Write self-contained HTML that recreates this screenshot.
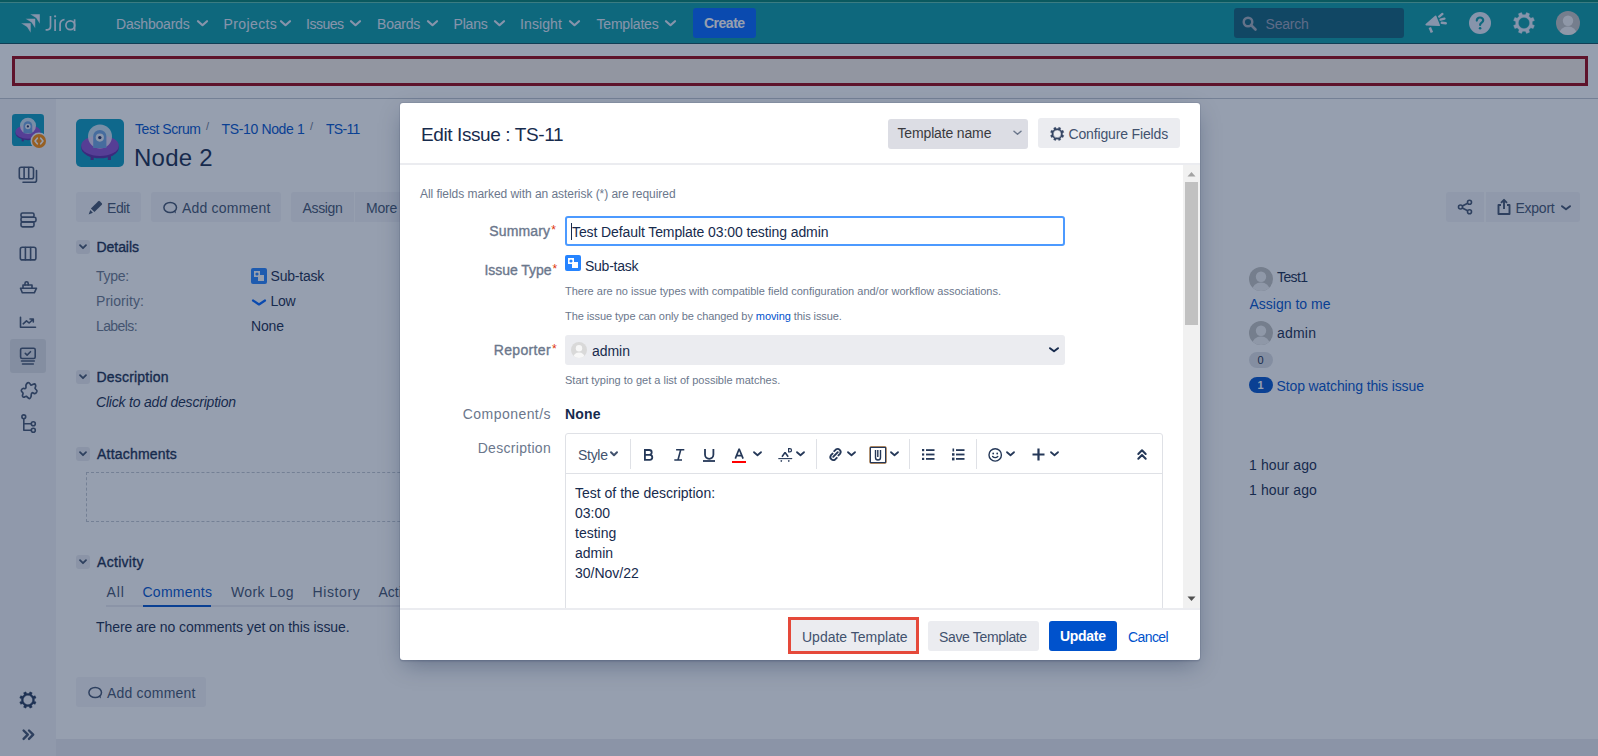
<!DOCTYPE html>
<html><head><meta charset="utf-8"><title>Edit Issue</title>
<style>
*{box-sizing:border-box;margin:0;padding:0}
html,body{width:1598px;height:756px;overflow:hidden;background:#fff;font-family:"Liberation Sans",sans-serif;color:#172B4D;font-size:14px}
.a{position:absolute;white-space:nowrap;line-height:normal}
svg.a{overflow:visible}
</style></head><body>
<div class="a" style="left:0px;top:0px;width:1598px;height:2px;background:#00806E;"></div>
<div class="a" style="left:0px;top:2px;width:1598px;height:1px;background:#5AC0AD;"></div>
<div class="a" style="left:0px;top:3px;width:1598px;height:40px;background:#099CA4;"></div>
<div class="a" style="left:0px;top:43px;width:1598px;height:1px;background:#0B4F5C;"></div>
<svg class="a" style="left:16px;top:8px;" width="68" height="30" viewBox="0 0 68 30"><defs><linearGradient id="jg" x1="0.9" y1="0.1" x2="0.15" y2="0.85"><stop offset="0.3" stop-color="#E3EBF8"/><stop offset="1" stop-color="#E3EBF8" stop-opacity=".35"/></linearGradient></defs><path d="M5.1 15.2H14.7V24.8L10.9 18.8V19.0H11.1Z" fill="url(#jg)"/><path d="M9.6 10.7H19.2V20.3L15.4 14.3V14.5H15.6Z" fill="url(#jg)"/><path d="M14.2 6.2H23.8V15.8L20.0 9.8V10.0H20.2Z" fill="url(#jg)"/><g fill="none" stroke="#E3EBF8" stroke-width="1.7"><path d="M34.5 8.1V18.6a3.2 3.2 0 0 1-3.2 3.2H29.6"/><path d="M39.1 11.3V23"/><path d="M44.1 23V16a4.4 4.4 0 0 1 4.4-4.4"/><circle cx="54.3" cy="17.2" r="4.4"/><path d="M58.6 11.3V23"/></g><circle cx="39.1" cy="8.3" r="1.1" fill="#E3EBF8"/></svg>
<div class="a" style="left:116px;top:15.83px;font-size:14px;color:#E3EBF8;font-weight:normal;letter-spacing:-0.2px;font-style:normal;">Dashboards</div>
<svg class="a" style="left:197px;top:20px;" width="11" height="8" viewBox="0 0 11 8"><path d="M1 1.2 L5.5 5.2 L10 1.2" fill="none" stroke="#E3EBF8" stroke-width="2.2" stroke-linecap="round" stroke-linejoin="round"/></svg>
<div class="a" style="left:223.5px;top:15.83px;font-size:14px;color:#E3EBF8;font-weight:normal;letter-spacing:0.4px;font-style:normal;">Projects</div>
<svg class="a" style="left:280px;top:20px;" width="11" height="8" viewBox="0 0 11 8"><path d="M1 1.2 L5.5 5.2 L10 1.2" fill="none" stroke="#E3EBF8" stroke-width="2.2" stroke-linecap="round" stroke-linejoin="round"/></svg>
<div class="a" style="left:306px;top:15.83px;font-size:14px;color:#E3EBF8;font-weight:normal;letter-spacing:-0.5px;font-style:normal;">Issues</div>
<svg class="a" style="left:350px;top:20px;" width="11" height="8" viewBox="0 0 11 8"><path d="M1 1.2 L5.5 5.2 L10 1.2" fill="none" stroke="#E3EBF8" stroke-width="2.2" stroke-linecap="round" stroke-linejoin="round"/></svg>
<div class="a" style="left:377px;top:15.83px;font-size:14px;color:#E3EBF8;font-weight:normal;letter-spacing:-0.2px;font-style:normal;">Boards</div>
<svg class="a" style="left:427px;top:20px;" width="11" height="8" viewBox="0 0 11 8"><path d="M1 1.2 L5.5 5.2 L10 1.2" fill="none" stroke="#E3EBF8" stroke-width="2.2" stroke-linecap="round" stroke-linejoin="round"/></svg>
<div class="a" style="left:453.5px;top:15.83px;font-size:14px;color:#E3EBF8;font-weight:normal;letter-spacing:-0.2px;font-style:normal;">Plans</div>
<svg class="a" style="left:494px;top:20px;" width="11" height="8" viewBox="0 0 11 8"><path d="M1 1.2 L5.5 5.2 L10 1.2" fill="none" stroke="#E3EBF8" stroke-width="2.2" stroke-linecap="round" stroke-linejoin="round"/></svg>
<div class="a" style="left:520px;top:15.83px;font-size:14px;color:#E3EBF8;font-weight:normal;letter-spacing:0.1px;font-style:normal;">Insight</div>
<svg class="a" style="left:569px;top:20px;" width="11" height="8" viewBox="0 0 11 8"><path d="M1 1.2 L5.5 5.2 L10 1.2" fill="none" stroke="#E3EBF8" stroke-width="2.2" stroke-linecap="round" stroke-linejoin="round"/></svg>
<div class="a" style="left:596.5px;top:15.83px;font-size:14px;color:#E3EBF8;font-weight:normal;letter-spacing:-0.2px;font-style:normal;">Templates</div>
<svg class="a" style="left:665px;top:20px;" width="11" height="8" viewBox="0 0 11 8"><path d="M1 1.2 L5.5 5.2 L10 1.2" fill="none" stroke="#E3EBF8" stroke-width="2.2" stroke-linecap="round" stroke-linejoin="round"/></svg>
<div class="a" style="left:693px;top:8px;width:63px;height:30px;background:#0065FF;border-radius:3px"></div>
<div class="a" style="left:704px;top:15.33px;font-size:14px;color:#FFFFFF;font-weight:bold;letter-spacing:-0.5px;font-style:normal;">Create</div>
<div class="a" style="left:1234px;top:8px;width:170px;height:30px;background:#0E6077;border-radius:3px"></div>
<svg class="a" style="left:1242px;top:16px;" width="15" height="15" viewBox="0 0 15 15"><circle cx="6" cy="6" r="4.3" fill="none" stroke="#A5ADBA" stroke-width="2.4"/><path d="M9 9l4.5 4.5" stroke="#A5ADBA" stroke-width="2.6" stroke-linecap="round"/></svg>
<div class="a" style="left:1265.5px;top:16.33px;font-size:14px;color:#9AA0B8;font-weight:normal;letter-spacing:-0.2px;font-style:normal;">Search</div>
<svg class="a" style="left:1424px;top:12px;" width="24" height="22" viewBox="0 0 24 22"><g fill="#E3EBF8" stroke="#E3EBF8" stroke-linecap="round" stroke-linejoin="round"><path d="M2.2 12.6L11.6 4.4L15.2 13.3Z" stroke-width="1.6"/><path d="M5.8 15.4L7.9 20.6" stroke-width="2.6" stroke-linecap="butt"/><path d="M15.2 4.6L18.4 1.9M16.6 7.6L20.4 6.6M17.8 10.8L21.8 11.3" stroke-width="2.4"/></g></svg>
<svg class="a" style="left:1469px;top:12px;" width="22" height="22" viewBox="0 0 22 22"><circle cx="11" cy="11" r="11" fill="#E3EBF8"/><path d="M7.8 8.6c0-1.9 1.4-3.1 3.2-3.1s3.2 1.1 3.2 2.8c0 2.3-3.1 2.4-3.1 4.6" fill="none" stroke="#099CA4" stroke-width="2.2" stroke-linecap="round"/><circle cx="11.1" cy="16.3" r="1.3" fill="#099CA4"/></svg>
<svg class="a" style="left:1512px;top:11px;" width="24" height="24" viewBox="0 0 24 24"><path d="M20.18 13.43 L22.40 14.53 L21.14 17.56 L18.79 16.77 L17.87 17.87 L16.77 18.79 L17.56 21.14 L14.53 22.40 L13.43 20.18 L12.00 20.30 L10.57 20.18 L9.47 22.40 L6.44 21.14 L7.23 18.79 L6.13 17.87 L5.21 16.77 L2.86 17.56 L1.60 14.53 L3.82 13.43 L3.70 12.00 L3.82 10.57 L1.60 9.47 L2.86 6.44 L5.21 7.23 L6.13 6.13 L7.23 5.21 L6.44 2.86 L9.47 1.60 L10.57 3.82 L12.00 3.70 L13.43 3.82 L14.53 1.60 L17.56 2.86 L16.77 5.21 L17.87 6.13 L18.79 7.23 L21.14 6.44 L22.40 9.47 L20.18 10.57 L20.30 12.00Z M17.7 12 A5.7 5.7 0 1 0 6.3 12 A5.7 5.7 0 1 0 17.7 12Z" fill="#E3EBF8" fill-rule="evenodd" stroke="#E3EBF8" stroke-width="0.4" stroke-linejoin="round"/></svg>
<svg class="a" style="left:1556px;top:11px;" width="24" height="24" viewBox="0 0 24 24"><defs><clipPath id="ca"><circle cx="12" cy="12" r="12"/></clipPath></defs><circle cx="12" cy="12" r="12" fill="#C3C3C1"/><g clip-path="url(#ca)" fill="#F3F3F3"><circle cx="12" cy="9.8" r="5.2"/><ellipse cx="12" cy="23.5" rx="8.8" ry="8"/></g></svg>
<div class="a" style="left:0px;top:44px;width:1598px;height:54px;background:#FFFFFF;"></div>
<div class="a" style="left:0px;top:98px;width:1598px;height:1px;background:#C1C7D0;"></div>
<div class="a" style="left:12px;top:56px;width:1576px;height:30px;background:#F8EEE6;border:3px solid #9A0010;box-sizing:border-box"></div>
<div class="a" style="left:0px;top:99px;width:56px;height:657px;background:#F4F5F7;"></div>
<div class="a" style="left:56px;top:739px;width:1542px;height:17px;background:#EBECF0;"></div>
<svg class="a" style="left:76px;top:119px;" width="48" height="48" viewBox="0 0 48 48"><rect width="48" height="48" rx="5" fill="#0A9CC0"/><rect x="14.5" y="34" width="3.2" height="7" fill="#5A2A9B"/><rect x="31.8" y="34" width="3.2" height="7" fill="#5A2A9B"/><ellipse cx="24" cy="28.5" rx="18.8" ry="10.8" fill="#5A2AA5"/><ellipse cx="24" cy="26.8" rx="18.8" ry="10.3" fill="#8A4FD0"/><circle cx="24" cy="17.6" r="12" fill="#F4F0FA" opacity=".82"/><path d="M17.2 29V17.5a6.6 6.6 0 0 1 13.2 0V29z" fill="#6EA3E0"/><circle cx="23.8" cy="18.6" r="4.1" fill="#E9EEF6"/><circle cx="23.8" cy="18.6" r="1.7" fill="#1F2A60"/></svg>
<svg class="a" style="left:12px;top:114px;" width="32" height="32" viewBox="0 0 48 48"><rect width="48" height="48" rx="5" fill="#0A9CC0"/><rect x="14.5" y="34" width="3.2" height="7" fill="#5A2A9B"/><rect x="31.8" y="34" width="3.2" height="7" fill="#5A2A9B"/><ellipse cx="24" cy="28.5" rx="18.8" ry="10.8" fill="#5A2AA5"/><ellipse cx="24" cy="26.8" rx="18.8" ry="10.3" fill="#8A4FD0"/><circle cx="24" cy="17.6" r="12" fill="#F4F0FA" opacity=".82"/><path d="M17.2 29V17.5a6.6 6.6 0 0 1 13.2 0V29z" fill="#6EA3E0"/><circle cx="23.8" cy="18.6" r="4.1" fill="#E9EEF6"/><circle cx="23.8" cy="18.6" r="1.7" fill="#1F2A60"/></svg>
<svg class="a" style="left:30px;top:132px;" width="18" height="18" viewBox="0 0 18 18"><circle cx="9" cy="9" r="8.5" fill="#F4F5F7"/><circle cx="9" cy="9" r="7" fill="#FF8B00"/><path d="M7.3 6.2L5 9l2.3 2.8M10.7 6.2L13 9l-2.3 2.8" fill="none" stroke="#fff" stroke-width="1.6" stroke-linecap="round" stroke-linejoin="round"/></svg>
<svg class="a" style="left:18px;top:166px;" width="20" height="20" viewBox="0 0 20 20"><g fill="none" stroke="#42526E" stroke-width="1.6" stroke-linecap="round" stroke-linejoin="round"><rect x="1.3" y="1.3" width="14.2" height="11.5" rx="1.8"/><path d="M6.1 1.5v11M10.7 1.5v11M5 16.3h11.5a2 2 0 0 0 2-2V4.5"/></g></svg>
<svg class="a" style="left:19px;top:212px;" width="20" height="20" viewBox="0 0 20 20"><g fill="none" stroke="#42526E" stroke-width="1.6" stroke-linecap="round" stroke-linejoin="round"><rect x="2" y="1" width="13" height="4.3" rx="1.6"/><rect x="2" y="5.3" width="15" height="4.6" rx="1.6"/><rect x="2" y="9.9" width="13" height="5" rx="1.6"/></g></svg>
<svg class="a" style="left:19px;top:246px;" width="20" height="20" viewBox="0 0 20 20"><g fill="none" stroke="#42526E" stroke-width="1.6" stroke-linecap="round" stroke-linejoin="round"><rect x="1.3" y="1.3" width="15.6" height="12.6" rx="2"/><path d="M6.4 1.5v12.2M11.6 1.5v12.2"/></g></svg>
<svg class="a" style="left:19px;top:281px;" width="20" height="20" viewBox="0 0 20 20"><g fill="none" stroke="#42526E" stroke-width="1.6" stroke-linecap="round" stroke-linejoin="round"><path d="M1.5 7.2h16l-2.2 4.6H3.3z"/><path d="M4 7V4h9v3"/><path d="M6 4V2.3a1.6 1.6 0 0 1 3.2 0V4"/></g></svg>
<svg class="a" style="left:19px;top:316px;" width="20" height="20" viewBox="0 0 20 20"><g fill="none" stroke="#42526E" stroke-width="1.6" stroke-linecap="round" stroke-linejoin="round"><path d="M1.5 1.2v10h15"/><path d="M4.2 7.8l3.3-3 2.6 2.2L14 3.3M11 3h3.3v3"/></g></svg>
<div class="a" style="left:10px;top:339px;width:36px;height:34px;background:#DFE1E6;border-radius:3px"></div>
<svg class="a" style="left:19px;top:347px;" width="20" height="20" viewBox="0 0 20 20"><g fill="none" stroke="#42526E" stroke-width="1.6" stroke-linecap="round" stroke-linejoin="round"><rect x="1.6" y="1.2" width="14.6" height="10.3" rx="1.5"/><path d="M6.3 6.4l1.8 1.7 3.4-3.4M2.5 14h12.8M3.5 17h10.8"/></g></svg>
<svg class="a" style="left:16px;top:378px;" width="26" height="26" viewBox="0 0 26 26"><path d="M12.4 4.6 C13.6 4.6 14.4 6.6 14.9 7.1 C15.6 7.6 17.6 5.6 18.6 5.9 C19.8 6.4 19.9 8.2 19.4 9 C18.9 9.8 18.6 10.3 19.6 11.2 C20.6 12 21.3 12.7 20.9 13.6 C20.2 15 19 15.8 18.2 15.6 C17.2 15.2 16.6 14.3 16 14.8 C15.3 15.4 15.1 16.3 15.2 17.4 C15.2 18.5 14.3 20.4 13.3 20.6 C12.3 20.6 11 18.6 10.3 18.3 C9.4 18 8.6 19.5 7.6 19.2 C6.6 18.9 6.2 17.8 6.6 16.9 C7 16 7.5 15.4 6.7 14.6 C5.9 13.8 5 13.3 5.3 12.3 C5.7 11.2 6.6 10.3 7.4 10.3 C8.3 10.4 9 11.2 9.7 10.3 C10.3 9.5 9.9 8.6 9.9 7.6 C10 6.4 11.3 4.6 12.4 4.6Z" fill="none" stroke="#42526E" stroke-width="1.7" stroke-linejoin="round"/></svg>
<svg class="a" style="left:20px;top:414px;" width="20" height="20" viewBox="0 0 20 20"><g fill="none" stroke="#42526E" stroke-width="1.6" stroke-linecap="round" stroke-linejoin="round"><circle cx="3.8" cy="2.8" r="1.9"/><circle cx="13.3" cy="9.8" r="2"/><circle cx="13.3" cy="16.2" r="2"/><path d="M3.8 4.7v11.5h7.5M3.8 9.8h7.5"/></g></svg>
<svg class="a" style="left:18px;top:690px;" width="20" height="20" viewBox="0 0 20 20"><path d="M16.29 11.18 L18.05 12.04 L17.11 14.32 L15.25 13.68 L14.50 14.60 L13.58 15.35 L14.22 17.21 L11.94 18.15 L11.08 16.39 L9.90 16.50 L8.72 16.39 L7.86 18.15 L5.58 17.21 L6.22 15.35 L5.30 14.60 L4.55 13.68 L2.69 14.32 L1.75 12.04 L3.51 11.18 L3.40 10.00 L3.51 8.82 L1.75 7.96 L2.69 5.68 L4.55 6.32 L5.30 5.40 L6.22 4.65 L5.58 2.79 L7.86 1.85 L8.72 3.61 L9.90 3.50 L11.08 3.61 L11.94 1.85 L14.22 2.79 L13.58 4.65 L14.50 5.40 L15.25 6.32 L17.11 5.68 L18.05 7.96 L16.29 8.82 L16.40 10.00Z M14.600000000000001 10 A4.7 4.7 0 1 0 5.2 10 A4.7 4.7 0 1 0 14.600000000000001 10Z" fill="#253858" fill-rule="evenodd" stroke="#253858" stroke-width="0.4" stroke-linejoin="round"/></svg>
<svg class="a" style="left:20px;top:729px;" width="20" height="12" viewBox="0 0 20 12"><g fill="none" stroke="#42526E" stroke-width="2.4" stroke-linecap="round" stroke-linejoin="round"><path d="M3.6 1.5l4.2 4.2-4.2 4.2M9 1.5l4.2 4.2L9 9.9"/></g></svg>
<div class="a" style="left:135px;top:121.33px;font-size:14px;color:#0052CC;font-weight:normal;letter-spacing:-0.45px;font-style:normal;">Test Scrum</div>
<div class="a" style="left:206px;top:120.05px;font-size:11px;color:#6B778C;font-weight:normal;letter-spacing:0px;font-style:normal;">/</div>
<div class="a" style="left:221.5px;top:121.33px;font-size:14px;color:#0052CC;font-weight:normal;letter-spacing:-0.35px;font-style:normal;">TS-10 Node 1</div>
<div class="a" style="left:310px;top:120.05px;font-size:11px;color:#6B778C;font-weight:normal;letter-spacing:0px;font-style:normal;">/</div>
<div class="a" style="left:326px;top:121.33px;font-size:14px;color:#0052CC;font-weight:normal;letter-spacing:-0.7px;font-style:normal;">TS-11</div>
<div class="a" style="left:134px;top:144.28px;font-size:24px;color:#172B4D;font-weight:normal;letter-spacing:0.25px;font-style:normal;">Node 2</div>
<div class="a" style="left:76px;top:192px;width:65px;height:30px;background:#F4F5F7;border-radius:3px"></div>
<svg class="a" style="left:88px;top:200px;" width="15" height="15" viewBox="0 0 15 15"><path d="M2.9 8.6L10.3 1.2a1 1 0 0 1 1.4 0l2.1 2.1a1 1 0 0 1 0 1.4L6.4 12.1z" fill="#42526E"/><path d="M2.3 10.1L4.9 12.7L0.6 14.4z" fill="#42526E"/></svg>
<div class="a" style="left:107px;top:199.83px;font-size:14px;color:#42526E;font-weight:normal;letter-spacing:-0.4px;font-style:normal;">Edit</div>
<div class="a" style="left:151px;top:192px;width:130px;height:30px;background:#F4F5F7;border-radius:3px"></div>
<svg class="a" style="left:162px;top:199px;" width="16" height="16" viewBox="0 0 16 16"><ellipse cx="8.2" cy="8.5" rx="6.3" ry="5.1" fill="none" stroke="#42526E" stroke-width="1.5"/><path d="M11.2 12.3l2.8 2.2-.6-3.2z" fill="#42526E"/></svg>
<div class="a" style="left:182px;top:199.83px;font-size:14px;color:#42526E;font-weight:normal;letter-spacing:0.2px;font-style:normal;">Add comment</div>
<div class="a" style="left:291px;top:192px;width:63px;height:30px;background:#F4F5F7;border-radius:3px 0 0 3px"></div>
<div class="a" style="left:302.5px;top:199.83px;font-size:14px;color:#42526E;font-weight:normal;letter-spacing:-0.35px;font-style:normal;">Assign</div>
<div class="a" style="left:355px;top:192px;width:60px;height:30px;background:#F4F5F7;border-radius:0 3px 3px 0"></div>
<div class="a" style="left:366px;top:199.83px;font-size:14px;color:#42526E;font-weight:normal;letter-spacing:-0.2px;font-style:normal;">More</div>
<div class="a" style="left:76px;top:240px;width:14px;height:14px;background:#EBECF0;border-radius:3px"></div>
<svg class="a" style="left:79px;top:244px;" width="8" height="6" viewBox="0 0 8 6"><path d="M1 1.2l3 3 3-3" fill="none" stroke="#42526E" stroke-width="1.8" stroke-linecap="round" stroke-linejoin="round"/></svg>
<div class="a" style="left:96.5px;top:239.33px;font-size:14px;color:#172B4D;font-weight:normal;letter-spacing:-0.05px;font-style:normal;-webkit-text-stroke:0.35px #172B4D;">Details</div>
<div class="a" style="left:96px;top:267.83px;font-size:14px;color:#6B778C;font-weight:normal;letter-spacing:-0.25px;font-style:normal;">Type:</div>
<svg class="a" style="left:251px;top:268px;" width="16" height="16" viewBox="0 0 16 16"><rect width="16" height="16" rx="2" fill="#2684FF"/><rect x="3" y="3" width="6" height="6" fill="#fff"/><circle cx="6" cy="6" r="1.6" fill="#2684FF"/><rect x="7" y="7" width="6" height="6" fill="#fff"/></svg>
<div class="a" style="left:270.5px;top:267.83px;font-size:14px;color:#172B4D;font-weight:normal;letter-spacing:-0.2px;font-style:normal;">Sub-task</div>
<div class="a" style="left:96px;top:292.83px;font-size:14px;color:#6B778C;font-weight:normal;letter-spacing:0.05px;font-style:normal;">Priority:</div>
<svg class="a" style="left:251px;top:298px;" width="16" height="10" viewBox="0 0 16 10"><path d="M2 2.5l6 4 6-4" fill="none" stroke="#0065FF" stroke-width="2.2" stroke-linecap="round" stroke-linejoin="round"/></svg>
<div class="a" style="left:270.5px;top:292.83px;font-size:14px;color:#172B4D;font-weight:normal;letter-spacing:-0.3px;font-style:normal;">Low</div>
<div class="a" style="left:96px;top:317.83px;font-size:14px;color:#6B778C;font-weight:normal;letter-spacing:-0.6px;font-style:normal;">Labels:</div>
<div class="a" style="left:251px;top:317.83px;font-size:14px;color:#172B4D;font-weight:normal;letter-spacing:-0.15px;font-style:normal;">None</div>
<div class="a" style="left:76px;top:370px;width:14px;height:14px;background:#EBECF0;border-radius:3px"></div>
<svg class="a" style="left:79px;top:374px;" width="8" height="6" viewBox="0 0 8 6"><path d="M1 1.2l3 3 3-3" fill="none" stroke="#42526E" stroke-width="1.8" stroke-linecap="round" stroke-linejoin="round"/></svg>
<div class="a" style="left:96.5px;top:369.33px;font-size:14px;color:#172B4D;font-weight:normal;letter-spacing:0.2px;font-style:normal;-webkit-text-stroke:0.35px #172B4D;">Description</div>
<div class="a" style="left:96px;top:394.33px;font-size:14px;color:#172B4D;font-weight:normal;letter-spacing:-0.2px;font-style:italic;">Click to add description</div>
<div class="a" style="left:76px;top:447px;width:14px;height:14px;background:#EBECF0;border-radius:3px"></div>
<svg class="a" style="left:79px;top:451px;" width="8" height="6" viewBox="0 0 8 6"><path d="M1 1.2l3 3 3-3" fill="none" stroke="#42526E" stroke-width="1.8" stroke-linecap="round" stroke-linejoin="round"/></svg>
<div class="a" style="left:97px;top:446.33px;font-size:14px;color:#172B4D;font-weight:normal;letter-spacing:0.2px;font-style:normal;-webkit-text-stroke:0.35px #172B4D;">Attachments</div>
<div class="a" style="left:86px;top:472px;width:500px;height:50px;background:transparent;border:1px dashed #C1C7D0;box-sizing:border-box"></div>
<div class="a" style="left:76px;top:555px;width:14px;height:14px;background:#EBECF0;border-radius:3px"></div>
<svg class="a" style="left:79px;top:559px;" width="8" height="6" viewBox="0 0 8 6"><path d="M1 1.2l3 3 3-3" fill="none" stroke="#42526E" stroke-width="1.8" stroke-linecap="round" stroke-linejoin="round"/></svg>
<div class="a" style="left:97px;top:554.33px;font-size:14px;color:#172B4D;font-weight:normal;letter-spacing:0.3px;font-style:normal;-webkit-text-stroke:0.35px #172B4D;">Activity</div>
<div class="a" style="left:106.5px;top:584.33px;font-size:14px;color:#42526E;font-weight:normal;letter-spacing:0.9px;font-style:normal;">All</div>
<div class="a" style="left:142.5px;top:584.33px;font-size:14px;color:#0052CC;font-weight:normal;letter-spacing:0.25px;font-style:normal;">Comments</div>
<div class="a" style="left:231px;top:584.33px;font-size:14px;color:#42526E;font-weight:normal;letter-spacing:0.4px;font-style:normal;">Work Log</div>
<div class="a" style="left:312.5px;top:584.33px;font-size:14px;color:#42526E;font-weight:normal;letter-spacing:0.6px;font-style:normal;">History</div>
<div class="a" style="left:378.5px;top:584.33px;font-size:14px;color:#42526E;font-weight:normal;letter-spacing:0px;font-style:normal;">Activity</div>
<div class="a" style="left:106px;top:605px;width:400px;height:2px;background:#EBECF0;"></div>
<div class="a" style="left:143px;top:605px;width:68px;height:2px;background:#0052CC;"></div>
<div class="a" style="left:96px;top:619.33px;font-size:14px;color:#172B4D;font-weight:normal;letter-spacing:-0.08px;font-style:normal;">There are no comments yet on this issue.</div>
<div class="a" style="left:76px;top:677px;width:130px;height:30px;background:#F4F5F7;border-radius:3px"></div>
<svg class="a" style="left:87px;top:684px;" width="16" height="16" viewBox="0 0 16 16"><ellipse cx="8.2" cy="8.5" rx="6.3" ry="5.1" fill="none" stroke="#42526E" stroke-width="1.5"/><path d="M11.2 12.3l2.8 2.2-.6-3.2z" fill="#42526E"/></svg>
<div class="a" style="left:107px;top:684.83px;font-size:14px;color:#42526E;font-weight:normal;letter-spacing:0.2px;font-style:normal;">Add comment</div>
<div class="a" style="left:1446px;top:192px;width:38px;height:30px;background:#F4F5F7;border-radius:3px 0 0 3px"></div>
<svg class="a" style="left:1457px;top:199px;" width="16" height="16" viewBox="0 0 16 16"><g fill="none" stroke="#42526E" stroke-width="1.6"><circle cx="12.5" cy="3.3" r="2"/><circle cx="3.5" cy="8" r="2"/><circle cx="12.5" cy="12.7" r="2"/><path d="M5.3 7l5.4-2.8M5.3 9l5.4 2.8"/></g></svg>
<div class="a" style="left:1486px;top:192px;width:94px;height:30px;background:#F4F5F7;border-radius:0 3px 3px 0"></div>
<svg class="a" style="left:1496px;top:198px;" width="16" height="18" viewBox="0 0 16 18"><g fill="none" stroke="#42526E" stroke-width="1.9" stroke-linejoin="round"><path d="M5 7H2.5v9h11V7H11"/><path d="M8 11V2M5 4.8L8 1.8l3 3"/></g></svg>
<div class="a" style="left:1515.5px;top:199.83px;font-size:14px;color:#42526E;font-weight:normal;letter-spacing:-0.25px;font-style:normal;">Export</div>
<svg class="a" style="left:1561px;top:205px;" width="10" height="7" viewBox="0 0 10 7"><path d="M1 1.2 L5.0 4.2 L9 1.2" fill="none" stroke="#42526E" stroke-width="2" stroke-linecap="round" stroke-linejoin="round"/></svg>
<svg class="a" style="left:1249px;top:267px;" width="24" height="24" viewBox="0 0 24 24"><defs><clipPath id="c1249267"><circle cx="12" cy="12" r="12"/></clipPath></defs><circle cx="12" cy="12" r="12" fill="#C3C3C1"/><g clip-path="url(#c1249267)" fill="#F3F3F3"><circle cx="12" cy="9.8" r="5.2"/><ellipse cx="12" cy="23.5" rx="8.8" ry="8"/></g></svg>
<div class="a" style="left:1277px;top:269.33px;font-size:14px;color:#172B4D;font-weight:normal;letter-spacing:-0.6px;font-style:normal;">Test1</div>
<div class="a" style="left:1249.5px;top:295.83px;font-size:14px;color:#0052CC;font-weight:normal;letter-spacing:0px;font-style:normal;">Assign to me</div>
<svg class="a" style="left:1249px;top:321px;" width="24" height="24" viewBox="0 0 24 24"><defs><clipPath id="c1249321"><circle cx="12" cy="12" r="12"/></clipPath></defs><circle cx="12" cy="12" r="12" fill="#C3C3C1"/><g clip-path="url(#c1249321)" fill="#F3F3F3"><circle cx="12" cy="9.8" r="5.2"/><ellipse cx="12" cy="23.5" rx="8.8" ry="8"/></g></svg>
<div class="a" style="left:1277px;top:324.83px;font-size:14px;color:#172B4D;font-weight:normal;letter-spacing:0.2px;font-style:normal;">admin</div>
<div class="a" style="left:1249px;top:352px;width:24px;height:16px;background:#DFE1E6;border-radius:8px"></div>
<div class="a" style="left:1257.5px;top:354.05px;font-size:11px;color:#172B4D;font-weight:normal;letter-spacing:0px;font-style:normal;">0</div>
<div class="a" style="left:1249px;top:377px;width:24px;height:16px;background:#0052CC;border-radius:8px"></div>
<div class="a" style="left:1257.5px;top:379.05px;font-size:11px;color:#FFFFFF;font-weight:bold;letter-spacing:0px;font-style:normal;">1</div>
<div class="a" style="left:1276.5px;top:377.83px;font-size:14px;color:#0052CC;font-weight:normal;letter-spacing:-0.12px;font-style:normal;">Stop watching this issue</div>
<div class="a" style="left:1249px;top:457.33px;font-size:14px;color:#172B4D;font-weight:normal;letter-spacing:0.1px;font-style:normal;">1 hour ago</div>
<div class="a" style="left:1249px;top:482.33px;font-size:14px;color:#172B4D;font-weight:normal;letter-spacing:0.1px;font-style:normal;">1 hour ago</div>
<div class="a" style="left:0px;top:0px;width:1598px;height:756px;background:rgba(23,43,77,0.45);"></div>
<div class="a" style="left:400px;top:103px;width:800px;height:557px;background:#fff;border-radius:3px;box-shadow:0 0 0 1px rgba(9,30,66,.08),0 2px 1px rgba(9,30,66,.08),0 8px 22px -4px rgba(9,30,66,.35)"></div>
<div class="a" style="left:421px;top:123.81px;font-size:19px;color:#172B4D;font-weight:normal;letter-spacing:-0.4px;font-style:normal;">Edit Issue : TS-11</div>
<div class="a" style="left:888px;top:119px;width:140px;height:30px;background:#DCDDE4;border-radius:3px"></div>
<div class="a" style="left:897.5px;top:125.03px;font-size:14px;color:#3A3A3E;font-weight:normal;letter-spacing:-0.15px;font-style:normal;">Template name</div>
<svg class="a" style="left:1013px;top:130px;" width="9" height="7" viewBox="0 0 9 7"><path d="M1 1.2 L4.5 4.2 L8 1.2" fill="none" stroke="#6B778C" stroke-width="1.5" stroke-linecap="round" stroke-linejoin="round"/></svg>
<div class="a" style="left:1038px;top:118px;width:142px;height:30px;background:#EBECF0;border-radius:3px"></div>
<svg class="a" style="left:1049px;top:126px;" width="16" height="16" viewBox="0 0 16 16"><path d="M13.42 8.81 L14.81 9.51 L14.01 11.44 L12.54 10.95 L11.95 11.65 L11.25 12.24 L11.74 13.71 L9.81 14.51 L9.11 13.12 L8.20 13.20 L7.29 13.12 L6.59 14.51 L4.66 13.71 L5.15 12.24 L4.45 11.65 L3.86 10.95 L2.39 11.44 L1.59 9.51 L2.98 8.81 L2.90 7.90 L2.98 6.99 L1.59 6.29 L2.39 4.36 L3.86 4.85 L4.45 4.15 L5.15 3.56 L4.66 2.09 L6.59 1.29 L7.29 2.68 L8.20 2.60 L9.11 2.68 L9.81 1.29 L11.74 2.09 L11.25 3.56 L11.95 4.15 L12.54 4.85 L14.01 4.36 L14.81 6.29 L13.42 6.99 L13.50 7.90Z M12.1 7.9 A3.9 3.9 0 1 0 4.299999999999999 7.9 A3.9 3.9 0 1 0 12.1 7.9Z" fill="#344563" fill-rule="evenodd" stroke="#344563" stroke-width="0.4" stroke-linejoin="round"/></svg>
<div class="a" style="left:1068.5px;top:125.83px;font-size:14px;color:#42526E;font-weight:normal;letter-spacing:-0.15px;font-style:normal;">Configure Fields</div>
<div class="a" style="left:400px;top:163px;width:800px;height:2px;background:#EBECF0;"></div>
<div class="a" style="left:1183px;top:165px;width:17px;height:443px;background:#F1F1F1;"></div>
<svg class="a" style="left:1186px;top:170px;" width="11" height="8" viewBox="0 0 11 8"><path d="M1.5 6.5h8L5.5 2z" fill="#A3A3A3"/></svg>
<div class="a" style="left:1185px;top:182px;width:13px;height:143px;background:#C1C1C1;"></div>
<svg class="a" style="left:1186px;top:595px;" width="11" height="8" viewBox="0 0 11 8"><path d="M1.5 1.5h8L5.5 6z" fill="#505050"/></svg>
<div class="a" style="left:420px;top:187.14px;font-size:12px;color:#6B778C;font-weight:normal;letter-spacing:-0.05px;font-style:normal;">All fields marked with an asterisk (*) are required</div>
<div class="a" style="left:256px;width:300px;text-align:right;top:223.33px;font-size:14px;color:#6B778C;font-weight:normal;letter-spacing:0.15px;-webkit-text-stroke:0.35px #6B778C;">Summary<span style="color:#DE350B;font-weight:normal;position:relative;top:-2px;margin-left:1px;font-size:12px;-webkit-text-stroke:0">*</span></div>
<div class="a" style="left:565px;top:216px;width:500px;height:30px;background:#FFFFFF;border:2px solid #4C9AFF;border-radius:3px;box-sizing:border-box"></div>
<div class="a" style="left:571px;top:223px;width:1px;height:17px;background:#172B4D;"></div>
<div class="a" style="left:572px;top:224.33px;font-size:14px;color:#172B4D;font-weight:normal;letter-spacing:-0.1px;font-style:normal;">Test Default Template 03:00 testing admin</div>
<div class="a" style="left:257px;width:300px;text-align:right;top:262.33px;font-size:14px;color:#6B778C;font-weight:normal;letter-spacing:-0.05px;-webkit-text-stroke:0.35px #6B778C;">Issue Type<span style="color:#DE350B;font-weight:normal;position:relative;top:-2px;margin-left:1px;font-size:12px;-webkit-text-stroke:0">*</span></div>
<svg class="a" style="left:565px;top:255px;" width="16" height="16" viewBox="0 0 16 16"><rect width="16" height="16" rx="2" fill="#2684FF"/><rect x="3" y="3" width="6" height="6" fill="#fff"/><circle cx="6" cy="6" r="1.6" fill="#2684FF"/><rect x="7" y="7" width="6" height="6" fill="#fff"/></svg>
<div class="a" style="left:585px;top:258.33px;font-size:14px;color:#172B4D;font-weight:normal;letter-spacing:-0.25px;font-style:normal;">Sub-task</div>
<div class="a" style="left:565px;top:285.05px;font-size:11px;color:#6B778C;font-weight:normal;letter-spacing:0px;font-style:normal;">There are no issue types with compatible field configuration and/or workflow associations.</div>
<div class="a" style="left:565px;top:310.05px;font-size:11px;color:#6B778C;font-weight:normal;letter-spacing:-0.08px;font-style:normal;">The issue type can only be changed by <span style="color:#0052CC">moving</span> this issue.</div>
<div class="a" style="left:257px;width:300px;text-align:right;top:342.33px;font-size:14px;color:#6B778C;font-weight:normal;letter-spacing:0.35px;-webkit-text-stroke:0.35px #6B778C;">Reporter<span style="color:#DE350B;font-weight:normal;position:relative;top:-2px;margin-left:1px;font-size:12px;-webkit-text-stroke:0">*</span></div>
<div class="a" style="left:565px;top:335px;width:500px;height:30px;background:#EBECF0;border-radius:3px"></div>
<svg class="a" style="left:571px;top:342px;" width="16" height="16" viewBox="0 0 16 16"><defs><clipPath id="cr"><circle cx="8" cy="8" r="8"/></clipPath></defs><circle cx="8" cy="8" r="8" fill="#D9D9D9"/><g clip-path="url(#cr)" fill="#F7F7F7"><circle cx="8" cy="6.3" r="3.2"/><ellipse cx="8" cy="15.5" rx="5.7" ry="5"/></g></svg>
<div class="a" style="left:592px;top:343.33px;font-size:14px;color:#172B4D;font-weight:normal;letter-spacing:-0.05px;font-style:normal;">admin</div>
<svg class="a" style="left:1049px;top:347px;" width="10" height="7" viewBox="0 0 10 7"><path d="M1 1.2 L5.0 4.2 L9 1.2" fill="none" stroke="#172B4D" stroke-width="2" stroke-linecap="round" stroke-linejoin="round"/></svg>
<div class="a" style="left:565px;top:374.05px;font-size:11px;color:#6B778C;font-weight:normal;letter-spacing:0px;font-style:normal;">Start typing to get a list of possible matches.</div>
<div class="a" style="left:251px;width:300px;text-align:right;top:406.33px;font-size:14px;color:#6B778C;font-weight:normal;letter-spacing:0.45px;">Component/s</div>
<div class="a" style="left:565px;top:406.33px;font-size:14px;color:#172B4D;font-weight:bold;letter-spacing:0.2px;font-style:normal;">None</div>
<div class="a" style="left:251px;width:300px;text-align:right;top:440.33px;font-size:14px;color:#6B778C;font-weight:normal;letter-spacing:0.3px;">Description</div>
<div class="a" style="left:400px;top:165px;width:783px;height:443px;overflow:hidden">
<div class="a" style="left:165px;top:268px;width:598px;height:260px;border:1px solid #DFE1E6;border-radius:3px;box-sizing:border-box"></div>
<div class="a" style="left:166px;top:308px;width:596px;height:1px;background:#DFE1E6"></div>
</div>
<div class="a" style="left:578px;top:446.83px;font-size:14px;color:#42526E;font-weight:normal;letter-spacing:-0.3px;font-style:normal;">Style</div>
<svg class="a" style="left:610px;top:451px;" width="8" height="7" viewBox="0 0 8 7"><path d="M1 1.2 L4.0 4.2 L7 1.2" fill="none" stroke="#42526E" stroke-width="2" stroke-linecap="round" stroke-linejoin="round"/></svg>
<div class="a" style="left:630px;top:439px;width:1px;height:30px;background:#DFE1E6;"></div>
<div class="a" style="left:816px;top:439px;width:1px;height:30px;background:#DFE1E6;"></div>
<div class="a" style="left:909px;top:439px;width:1px;height:30px;background:#DFE1E6;"></div>
<div class="a" style="left:976px;top:439px;width:1px;height:30px;background:#DFE1E6;"></div>
<svg class="a" style="left:638px;top:442px;" width="84" height="26" viewBox="0 0 84 26"><g fill="none" stroke="#253858" stroke-width="1.8"><path d="M6.9 8h4.4a2.4 2.4 0 0 1 0 4.8H6.9z M6.9 12.8h4.9a2.5 2.5 0 0 1 0 5H6.9z"/></g><path d="M38.1 7.75h8.2M36.3 17.95h7.7M42.6 8.2L40.1 17.5" stroke="#253858" stroke-width="1.6" fill="none"/><path d="M67 7v5.6a4.2 4.2 0 0 0 8.4 0V7" stroke="#253858" stroke-width="1.8" fill="none"/><rect x="65" y="18.1" width="12" height="1.8" fill="#253858"/></svg>
<svg class="a" style="left:731px;top:447px;" width="16" height="17" viewBox="0 0 16 17"><path d="M4.3 11.6L8 2.3h.3l3.8 9.3M5.6 8.7h5.2" stroke="#253858" stroke-width="1.7" fill="none"/><rect x="1" y="14" width="14" height="2" fill="#FF0000"/></svg>
<svg class="a" style="left:752.5px;top:451px;" width="9" height="7" viewBox="0 0 9 7"><path d="M1 1.2 L4.5 4.2 L8 1.2" fill="none" stroke="#253858" stroke-width="1.8" stroke-linecap="round" stroke-linejoin="round"/></svg>
<svg class="a" style="left:777px;top:446px;" width="18" height="18" viewBox="0 0 18 18"><path d="M5 10.8L7.8 6.8h.5L11.2 10.8" stroke="#253858" stroke-width="1.6" fill="none"/><path d="M1.3 12.6H15.2" stroke="#253858" stroke-width="1.1"/><path d="M4.6 14.3l-.6 1.3M11.5 14.3l.6 1.3" stroke="#253858" stroke-width="1.5"/><path d="M11.6 2.6h1.3a1.6 1.6 0 0 1 0 3.2h-1.3z" stroke="#253858" stroke-width="1.2" fill="none"/></svg>
<svg class="a" style="left:796px;top:451px;" width="9" height="7" viewBox="0 0 9 7"><path d="M1 1.2 L4.5 4.2 L8 1.2" fill="none" stroke="#253858" stroke-width="1.8" stroke-linecap="round" stroke-linejoin="round"/></svg>
<svg class="a" style="left:827px;top:446px;" width="17" height="17" viewBox="0 0 17 17"><g fill="none" stroke="#253858" stroke-width="1.9" stroke-linecap="round"><path d="M7.2 5.2l1.6-1.6a3 3 0 0 1 4.2 4.2l-1.6 1.6"/><path d="M9.8 11.8l-1.6 1.6a3 3 0 0 1-4.2-4.2l1.6-1.6"/><path d="M6.2 10.8l4.6-4.6"/></g></svg>
<svg class="a" style="left:847px;top:451px;" width="9" height="7" viewBox="0 0 9 7"><path d="M1 1.2 L4.5 4.2 L8 1.2" fill="none" stroke="#253858" stroke-width="1.8" stroke-linecap="round" stroke-linejoin="round"/></svg>
<svg class="a" style="left:869px;top:446px;" width="18" height="18" viewBox="0 0 18 18"><rect x="1" y="1" width="16" height="16" rx="1" fill="none" stroke="#8A5A2A" stroke-width="1.3"/><rect x="1.5" y="1.5" width="15" height="15" fill="none" stroke="#253858" stroke-width="1"/><path d="M6.5 4v7.5a2.5 2.5 0 0 0 5 0V4M8.8 4v7" fill="none" stroke="#253858" stroke-width="1.4"/></svg>
<svg class="a" style="left:890px;top:451px;" width="9" height="7" viewBox="0 0 9 7"><path d="M1 1.2 L4.5 4.2 L8 1.2" fill="none" stroke="#253858" stroke-width="1.8" stroke-linecap="round" stroke-linejoin="round"/></svg>
<svg class="a" style="left:921px;top:447px;" width="15" height="15" viewBox="0 0 15 15"><g fill="#253858"><rect x="1" y="2" width="2.2" height="2.2"/><rect x="1" y="6.4" width="2.2" height="2.2"/><rect x="1" y="10.8" width="2.2" height="2.2"/><rect x="5" y="2.2" width="8.5" height="1.8"/><rect x="5" y="6.6" width="8.5" height="1.8"/><rect x="5" y="11" width="8.5" height="1.8"/></g></svg>
<svg class="a" style="left:951px;top:447px;" width="15" height="15" viewBox="0 0 15 15"><g fill="#253858"><rect x="1.5" y="1.5" width="1.6" height="3"/><rect x="1" y="6.2" width="2.5" height="2.5"/><rect x="1" y="10.6" width="2.5" height="2.8"/><rect x="5" y="2.2" width="8.5" height="1.8"/><rect x="5" y="6.6" width="8.5" height="1.8"/><rect x="5" y="11" width="8.5" height="1.8"/></g></svg>
<svg class="a" style="left:987px;top:447px;" width="17" height="17" viewBox="0 0 17 17"><circle cx="8.2" cy="7.9" r="6.2" fill="none" stroke="#253858" stroke-width="1.4"/><circle cx="6.2" cy="6.5" r="0.9" fill="#253858"/><circle cx="10.2" cy="6.5" r="0.9" fill="#253858"/><path d="M5.6 9.4c1.5 1.6 3.7 1.6 5.2 0" fill="none" stroke="#253858" stroke-width="1.4" stroke-linecap="round"/></svg>
<svg class="a" style="left:1006px;top:451px;" width="9" height="7" viewBox="0 0 9 7"><path d="M1 1.2 L4.5 4.2 L8 1.2" fill="none" stroke="#253858" stroke-width="1.8" stroke-linecap="round" stroke-linejoin="round"/></svg>
<svg class="a" style="left:1031px;top:447px;" width="15" height="15" viewBox="0 0 15 15"><path d="M7.5 1.5v12M1.5 7.5h12" stroke="#253858" stroke-width="2.2"/></svg>
<svg class="a" style="left:1049.5px;top:451px;" width="9" height="7" viewBox="0 0 9 7"><path d="M1 1.2 L4.5 4.2 L8 1.2" fill="none" stroke="#253858" stroke-width="1.8" stroke-linecap="round" stroke-linejoin="round"/></svg>
<svg class="a" style="left:1135px;top:446px;" width="14" height="14" viewBox="0 0 14 14"><path d="M3.3 8l3.7-3.7 3.7 3.7M3.3 12.7L7 9l3.7 3.7" fill="none" stroke="#253858" stroke-width="2" stroke-linecap="round" stroke-linejoin="round"/></svg>
<div class="a" style="left:575px;top:483.3px;font-size:14px;line-height:20px;color:#172B4D;letter-spacing:0">Test of the description:<br>03:00<br>testing<br>admin<br>30/Nov/22</div>
<div class="a" style="left:400px;top:608px;width:800px;height:2px;background:#EBECF0;"></div>
<div class="a" style="left:788px;top:617px;width:131px;height:37px;background:transparent;border:3px solid #E5493A;box-sizing:border-box"></div>
<div class="a" style="left:791px;top:620px;width:125px;height:31px;background:#EBECF0;"></div>
<div class="a" style="left:802px;top:628.83px;font-size:14px;color:#42526E;font-weight:normal;letter-spacing:0px;font-style:normal;">Update Template</div>
<div class="a" style="left:928px;top:621px;width:111px;height:30px;background:#EBECF0;border-radius:3px"></div>
<div class="a" style="left:939px;top:628.83px;font-size:14px;color:#42526E;font-weight:normal;letter-spacing:-0.35px;font-style:normal;">Save Template</div>
<div class="a" style="left:1049px;top:621px;width:68px;height:30px;background:#0052CC;border-radius:3px"></div>
<div class="a" style="left:1060px;top:628.33px;font-size:14px;color:#FFFFFF;font-weight:bold;letter-spacing:-0.3px;font-style:normal;">Update</div>
<div class="a" style="left:1128px;top:629.33px;font-size:14px;color:#0052CC;font-weight:normal;letter-spacing:-0.6px;font-style:normal;">Cancel</div>
</body></html>
